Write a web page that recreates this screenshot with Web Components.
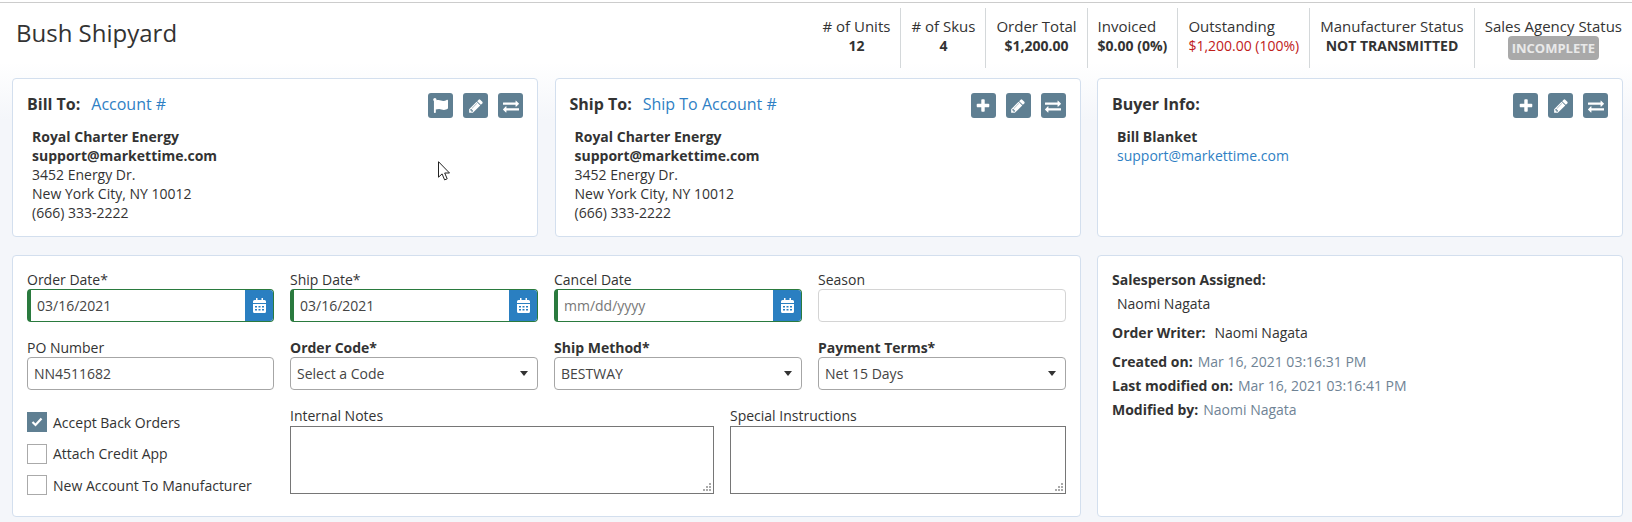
<!DOCTYPE html>
<html lang="en"><head><meta charset="utf-8"><title>Bush Shipyard</title>
<style>
html,body{margin:0;padding:0}
body{font:14px/19px "Open Sans",sans-serif;color:#333;width:1632px;height:522px;overflow:hidden;background:linear-gradient(#fff 0,#fff 62px,#f4f6fa 120px)}
</style></head><body>
<order-page></order-page>
<script>
const ICONS={
flag:['0 0 512 512','M349.565 98.783C295.978 98.783 251.721 64 184.348 64c-24.955 0-47.309 4.384-68.045 12.013a55.947 55.947 0 0 0 3.586-23.562C118.117 24.015 94.806 1.206 66.338.048 34.345-1.254 8 24.296 8 56c0 19.026 9.497 35.825 24 45.945V488c0 13.255 10.745 24 24 24h16c13.255 0 24-10.745 24-24v-94.400c28.311-12.064 63.582-22.122 114.435-22.122 53.588 0 97.844 34.783 165.217 34.783 48.169 0 86.667-16.294 122.505-40.858C506.84 359.452 512 349.571 512 339.045v-243.100c0-23.393-24.269-38.870-45.485-29.016-34.338 15.948-76.454 31.854-116.950 31.854z'],
pencil:['0 0 1792 1792','M491 1536l91-91-235-235-91 91v107h128v128h107zm523-928q0-22-22-22-10 0-17 7l-542 542q-7 7-7 17 0 22 22 22 10 0 17-7l542-542q7-7 7-17zm-54-192l416 416-832 832h-416v-416zm683 96q0 53-37 90l-166 166-416-416 166-165q36-38 90-38 53 0 91 38l235 234q37 39 37 91z'],
exchange:['0 0 1792 1792','M1792 1184v192q0 13-9.500 22.500t-22.500 9.500h-1376v192q0 13-9.500 22.500t-22.500 9.500q-12 0-24-10l-319-320q-9-9-9-22 0-14 9-23l320-320q9-9 23-9 13 0 22.500 9.500t9.500 22.500v192h1376q13 0 22.500 9.500t9.500 22.500zm0-544q0 14-9 23l-320 320q-9 9-23 9-13 0-22.500-9.500t-9.500-22.500v-192h-1376q-13 0-22.500-9.500t-9.500-22.500v-192q0-13 9.500-22.500t22.500-9.500h1376v-192q0-14 9-23t23-9q12 0 24 10l319 319q9 9 9 23z'],
plus:['0 0 1792 1792','M1600 736v192q0 40-28 68t-68 28h-416v416q0 40-28 68t-68 28h-192q-40 0-68-28t-28-68v-416h-416q-40 0-68-28t-28-68v-192q0-40 28-68t68-28h416v-416q0-40 28-68t68-28h192q40 0 68 28t28 68v416h416q40 0 68 28t28 68z']
};
function def(name,css,html,extra){
  customElements.define(name,class extends HTMLElement{
    constructor(){super();const s=this.attachShadow({mode:'open'});
      s.innerHTML='<style>'+css+'</style>'+(typeof html==='function'?html(this):html);}
    connectedCallback(){extra&&extra(this);}
  });
}
def('icon-button',`:host{width:25px;height:25px;border-radius:3px;background:#5f7f92;color:#fff;display:flex;align-items:center;justify-content:center}svg{width:16px;height:16px;display:block}:host([icon=flag]) svg{width:15px;height:15px}`,
 '<svg viewBox="0 0 1792 1792"></svg>',el=>{const i=ICONS[el.getAttribute('icon')],s=el.shadowRoot.querySelector('svg');s.setAttribute('viewBox',i[0]);s.innerHTML='<path fill="currentColor" d="'+i[1]+'"/>'});
def('info-card',`:host{display:block;background:#fff;border:1px solid #d3dfee;border-radius:4px;padding:14px;box-sizing:border-box;min-width:0}
.head{display:flex;justify-content:space-between;align-items:flex-start;height:25px}
.title{display:flex;gap:11px;font-size:16px;line-height:22px;font-weight:700;color:#333}
.acts{display:flex;gap:10px}
.body{margin-top:9px;padding-left:5px}`,
 `<div class="head"><div class="title"><slot name="title"></slot></div><div class="acts"><slot name="actions"></slot></div></div><div class="body"><slot></slot></div>`);
def('stat-cell',`:host{display:block;padding:9px 10px 0;border-right:1px solid #d4d8da;text-align:center;height:60px;box-sizing:border-box;white-space:nowrap}
:host(:last-child){border-right:0}
:host([left]){text-align:left}
.l{color:#333;font-size:15px}.v{font-weight:700;color:#333}:host([alert]) .v{font-weight:400;color:#c0201a}`,
 el=>`<div class="l">${el.getAttribute('label')}</div><div class="v"><slot></slot></div>`);
def('status-badge',`:host{display:inline-block;background:#a9a9a9;color:#e9e9e9;font-weight:700;font-size:13px;line-height:24px;height:24px;border-radius:4px;padding:0 3.500px;vertical-align:top}`,'<slot></slot>');
def('order-header',`:host{display:flex;justify-content:space-between;height:76px;margin-top:2px;border-top:1px solid #ccc;box-sizing:border-box}
.t{font-size:24px;line-height:30px;color:#333;margin:15px 0 0 16px}
.s{display:flex;padding-top:5px;height:60px}`,
 `<div class="t"><slot name="title"></slot></div><div class="s"><slot></slot></div>`);
def('form-field',`:host{display:block;min-width:0}
.l{line-height:19px;color:#333;white-space:nowrap}:host([strong]) .l{font-weight:700}`,
 el=>`<div class="l">${el.getAttribute('label')}</div><slot></slot>`);
def('date-box',`:host{display:flex;height:33px;box-sizing:border-box;border:1px solid #2a7a3e;border-left-width:4px;border-radius:4px;overflow:hidden;background:#fff}
.v{flex:1;padding-left:6px;line-height:31px;color:#444;white-space:nowrap}:host([empty]) .v{color:#777}
.b{width:28px;background:#2a7fc1;display:flex;align-items:center;justify-content:center}svg{width:13px;height:15px;display:block}`,
 `<div class="v"><slot></slot></div><div class="b"><svg viewBox="0 0 13 15"><path fill="#fff" d="M3 0h1.500v2h4V0H10v2h1.500A1.500 1.500 0 0 1 13 3.500V5H0V3.500A1.500 1.500 0 0 1 1.500 2H3zM0 6h13v7.500a1.500 1.500 0 0 1-1.500 1.500h-10A1.500 1.500 0 0 1 0 13.500z"/><path fill="#2a7fc1" d="M2 8h2v1.500H2zM5.500 8h2v1.500h-2zM9 8h2v1.500H9zM2 11h2v1.500H2zM5.500 11h2v1.500h-2zM9 11h2v1.500H9z"/></svg></div>`);
def('text-box',`:host{display:block;height:33px;box-sizing:border-box;border:1px solid #a6a6a6;border-radius:4px;padding-left:6px;line-height:31px;color:#444;background:#fff}:host([light]){border-color:#d4d4d4}`,'<slot></slot>');
def('select-box',`:host{display:flex;align-items:center;justify-content:space-between;height:33px;box-sizing:border-box;border:1px solid #a6a6a6;border-radius:4px;padding:0 9px 0 6px;color:#444;background:#fff}
i{width:0;height:0;border:4.500px solid transparent;border-top:5.500px solid #333;border-bottom:0}`,'<span><slot></slot></span><i></i>');
def('check-row',`:host{display:flex;align-items:center;gap:6px;height:20px;white-space:nowrap;color:#333}
.c{width:20px;height:20px;box-sizing:border-box;border:1px solid #aaa;background:#fff;display:flex;align-items:center;justify-content:center}
:host([checked]) .c{background:#5f7f92;border-color:#5f7f92}svg{width:12px;height:10px;display:none}:host([checked]) svg{display:block}`,
 `<div class="c"><svg viewBox="0 0 12 10"><path d="M1.500 5l3 3 6-6.500" fill="none" stroke="#fff" stroke-width="2.200"/></svg></div><slot></slot>`);
def('note-field',`:host{display:block;min-width:0}.l{line-height:19px;color:#333}
.w{position:relative;margin-top:1px}
textarea{display:block;width:100%;height:68px;box-sizing:border-box;margin:0;border:1px solid #767676;border-radius:0;background:#fff;outline:0;padding:2px;resize:none}
svg{position:absolute;right:3px;bottom:3px;width:8px;height:8px;pointer-events:none}`,
 el=>`<div class="l">${el.getAttribute('label')}</div><div class="w"><textarea></textarea><svg viewBox="0 0 8 8"><path fill="#aaa" d="M6 0h2v2H6zM3 3h2v2H3zM6 3h2v2H6zM0 6h2v2H0zM3 6h2v2H3zM6 6h2v2H6z"/></svg></div>`);
def('kv-line',`:host{display:flex;gap:5px;white-space:nowrap;line-height:19px}b{font-weight:700;color:#333}
span{color:#6f8395}:host([plain]) span{color:#333;margin-left:4px}`,
 el=>`<b>${el.getAttribute('k')}</b><span><slot></slot></span>`);
def('order-form',`:host{display:block}
.g{display:grid;grid-template-columns:247px 248px 248px 248px;gap:16px}
.r3{grid-column:1/-1;display:grid;grid-template-columns:247px 1fr;gap:16px}
.checks{display:flex;flex-direction:column;gap:11.500px;padding-top:6px}
.notes{display:grid;grid-template-columns:424px 336px;gap:16px}`,
`<div class="g">
<form-field label="Order Date*"><date-box>03/16/2021</date-box></form-field>
<form-field label="Ship Date*"><date-box>03/16/2021</date-box></form-field>
<form-field label="Cancel Date"><date-box empty>mm/dd/yyyy</date-box></form-field>
<form-field label="Season"><text-box light></text-box></form-field>
<form-field label="PO Number"><text-box>NN4511682</text-box></form-field>
<form-field label="Order Code*" strong><select-box>Select a Code</select-box></form-field>
<form-field label="Ship Method*" strong><select-box>BESTWAY</select-box></form-field>
<form-field label="Payment Terms*" strong><select-box>Net 15 Days</select-box></form-field>
<div class="r3"><div class="checks"><check-row checked>Accept Back Orders</check-row><check-row>Attach Credit App</check-row><check-row>New Account To Manufacturer</check-row></div>
<div class="notes"><note-field label="Internal Notes"></note-field><note-field label="Special Instructions"></note-field></div></div>
</div>`);
def('sales-panel',`:host{display:block}
.a{font-weight:700;line-height:19px}
.n{margin:5px 0 0 5px;line-height:19px}
.o{margin-top:10px}.p{margin-top:10px;display:flex;flex-direction:column;gap:5px}`,
`<div class="a">Salesperson Assigned:</div><div class="n">Naomi Nagata</div>
<kv-line class="o" k="Order Writer:" plain>Naomi Nagata</kv-line>
<div class="p"><kv-line k="Created on:">Mar 16, 2021 03:16:31 PM</kv-line><kv-line k="Last modified on:">Mar 16, 2021 03:16:41 PM</kv-line><kv-line k="Modified by:">Naomi Nagata</kv-line></div>`);
const addr=`<div><b>Royal Charter Energy</b><br><b>support@markettime.com</b><br>3452 Energy Dr.<br>New York City, NY 10012<br>(666) 333-2222</div>`;
const btns=a=>a.map(i=>`<icon-button slot="actions" icon="${i}"></icon-button>`).join('');
const link='color:#2f7fc4;font-weight:400';
def('order-page',`:host{display:block;position:relative;height:522px}
.grid{display:grid;grid-template-columns:repeat(3,526px);column-gap:16.500px;row-gap:18px;grid-template-rows:159px 262px;padding-left:12px}
.wide{grid-column:span 2}
.box{background:#fff;border:1px solid #d3dfee;border-radius:4px;padding:14px;box-sizing:border-box}
.cur{position:absolute;left:438px;top:159px;width:13px;height:20px}`,
`<order-header><span slot="title">Bush Shipyard</span>
<stat-cell label="# of Units">12</stat-cell><stat-cell label="# of Skus">4</stat-cell><stat-cell label="Order Total">$1,200.00</stat-cell><stat-cell label="Invoiced" left>$0.00 (0%)</stat-cell><stat-cell label="Outstanding" alert left>$1,200.00 (100%)</stat-cell><stat-cell label="Manufacturer Status">NOT TRANSMITTED</stat-cell><stat-cell label="Sales Agency Status"><status-badge>INCOMPLETE</status-badge></stat-cell></order-header>
<div class="grid">
<info-card><span slot="title">Bill To:</span><span slot="title" style="${link}">Account #</span>${btns(['flag','pencil','exchange'])}${addr}</info-card>
<info-card><span slot="title">Ship To:</span><span slot="title" style="${link}">Ship To Account #</span>${btns(['plus','pencil','exchange'])}${addr}</info-card>
<info-card><span slot="title">Buyer Info:</span>${btns(['plus','pencil','exchange'])}<div><b>Bill Blanket</b><br><span style="color:#2f7fc4">support@markettime.com</span></div></info-card>
<div class="wide box"><order-form></order-form></div>
<div class="box"><sales-panel></sales-panel></div>
</div>
<svg class="cur" viewBox="0 0 13 20"><path d="M.5.700v15.500l3.600-3.300 2.500 6 2.600-1.100-2.500-5.800h4.800z" fill="#fff" stroke="#222" stroke-width="1"/></svg>`);
</script>
</body></html>
